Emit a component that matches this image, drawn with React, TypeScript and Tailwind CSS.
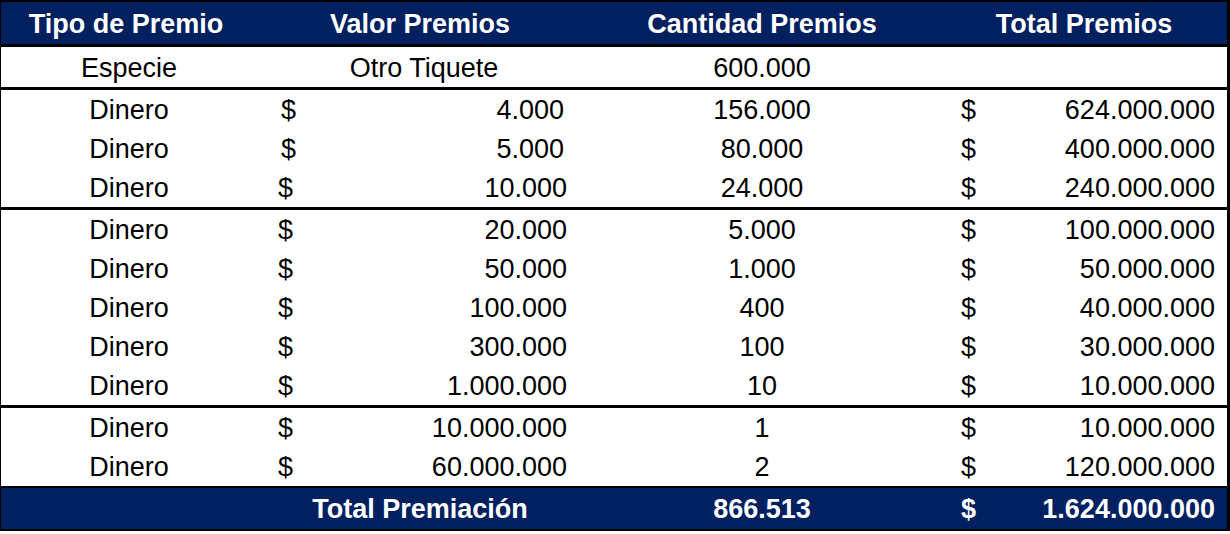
type Row = {
  tipo: string;
  valor: string;
  cantidad: string;
  total: string;
  shift?: boolean;
};

const groups: Row[][] = [
  [
    { tipo: 'Dinero', valor: '4.000', cantidad: '156.000', total: '624.000.000', shift: true },
    { tipo: 'Dinero', valor: '5.000', cantidad: '80.000', total: '400.000.000', shift: true },
    { tipo: 'Dinero', valor: '10.000', cantidad: '24.000', total: '240.000.000' },
  ],
  [
    { tipo: 'Dinero', valor: '20.000', cantidad: '5.000', total: '100.000.000' },
    { tipo: 'Dinero', valor: '50.000', cantidad: '1.000', total: '50.000.000' },
    { tipo: 'Dinero', valor: '100.000', cantidad: '400', total: '40.000.000' },
    { tipo: 'Dinero', valor: '300.000', cantidad: '100', total: '30.000.000' },
    { tipo: 'Dinero', valor: '1.000.000', cantidad: '10', total: '10.000.000' },
  ],
  [
    { tipo: 'Dinero', valor: '10.000.000', cantidad: '1', total: '10.000.000' },
    { tipo: 'Dinero', valor: '60.000.000', cantidad: '2', total: '120.000.000' },
  ],
];

const cols = 'grid grid-cols-[256px_326px_358px_1fr]';

function PrizeRow({ row }: { row: Row }) {
  return (
    <div className={`${cols} h-[39px] items-center pt-[1px]`}>
      <div className="text-center">{row.tipo}</div>
      <div className={`flex justify-between ${row.shift ? 'pl-[24px] pr-[19px]' : 'pl-[21px] pr-[16px]'}`}>
        <span>$</span>
        <span>{row.valor}</span>
      </div>
      <div className="text-center">{row.cantidad}</div>
      <div className="flex justify-between pl-[20px] pr-[12px]">
        <span>$</span>
        <span>{row.total}</span>
      </div>
    </div>
  );
}

export default function App() {
  return (
    <div className="w-[1230px] h-[534px] bg-white">
      <div
        className="border-t-2 border-l border-r-[3px] border-b-2 border-black text-[27px] leading-none text-black"
        style={{ fontFamily: '"Liberation Sans", Arial, sans-serif' }}
      >
        {/* Header */}
        <div className={`${cols} h-[42px] items-center pt-[3px] bg-[#002060] text-white font-bold`}>
          <div className="text-center pr-[6px]">Tipo de Premio</div>
          <div className="text-center">Valor Premios</div>
          <div className="text-center">Cantidad Premios</div>
          <div className="text-center">Total Premios</div>
        </div>

        {/* Especie */}
        <div className={`${cols} h-[43px] items-center pt-[2px] border-t-[3px] border-black`}>
          <div className="text-center">Especie</div>
          <div className="text-center pl-[8px]">Otro Tiquete</div>
          <div className="text-center">600.000</div>
          <div />
        </div>

        {groups.map((group, gi) => (
          <div key={gi} className="border-t-[3px] border-black">
            {group.map((row, ri) => (
              <PrizeRow key={ri} row={row} />
            ))}
          </div>
        ))}

        {/* Footer */}
        <div className={`${cols} h-[43px] items-center pt-[2px] bg-[#002060] text-white font-bold border-t-2 border-black`}>
          <div />
          <div className="text-center">Total Premiación</div>
          <div className="text-center">866.513</div>
          <div className="flex justify-between pl-[20px] pr-[12px]">
            <span>$</span>
            <span>1.624.000.000</span>
          </div>
        </div>
      </div>
    </div>
  );
}
